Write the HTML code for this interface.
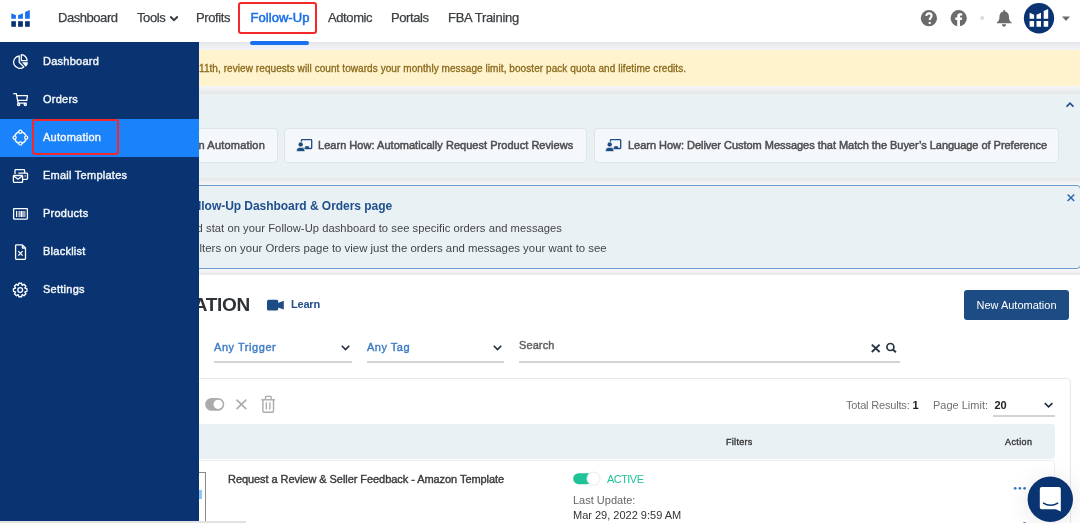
<!DOCTYPE html>
<html><head><meta charset="utf-8">
<style>
*{box-sizing:border-box;margin:0;padding:0}
body{will-change:transform}html,body{width:1080px;height:523px;overflow:hidden;background:#fff;font-family:"Liberation Sans",sans-serif;position:relative}
.a{position:absolute;white-space:nowrap}
.nav{font-size:13px;color:#3d4043;top:10px;line-height:16px;letter-spacing:-0.4px;-webkit-text-stroke:0.25px #3d4043}
.sb{font-size:11px;font-weight:400;color:#f4f6fa;left:43px;line-height:14px;letter-spacing:0.25px;-webkit-text-stroke:0.4px #f4f6fa}
.lb{background:#f5f8fa;border:1px solid #dde4ea;border-radius:4px;top:128px;height:34.5px}
.lbt{font-size:11px;font-weight:400;color:#4d4f52;line-height:14px;letter-spacing:0.03px;top:138px;-webkit-text-stroke:0.5px #4d4f52}
.ul{height:2px;background:#d3d3d3}
</style></head><body>
<!-- header -->
<svg class="a" style="left:0;top:0" width="40" height="40" viewBox="0 0 40 40">
<path d="M11.3 13.3 L15.9 15.3 L15.9 18.8 L11.3 18.8Z" fill="#1a6ef0"/>
<path d="M18.1 15.3 L22.9 13.3 L22.9 18.8 L18.1 18.8Z" fill="#1a6ef0"/>
<path d="M25.1 11.9 L29.8 9.9 L29.8 18.8 L25.1 18.8Z" fill="#1a6ef0"/>
<rect x="11.3" y="21.2" width="4.6" height="5.6" fill="#0a3471"/>
<rect x="18.1" y="21.2" width="4.8" height="5.6" fill="#0a3471"/>
<rect x="25.1" y="21.2" width="4.7" height="5.6" fill="#0a3471"/>
</svg>
<div class="a nav" style="left:58px;letter-spacing:-0.45px">Dashboard</div>
<div class="a nav" style="left:137px">Tools</div>
<svg class="a" style="left:169px;top:15px" width="10" height="7" viewBox="0 0 10 7"><path d="M1.3 1.5 L5 5.2 L8.7 1.5" fill="none" stroke="#33393f" stroke-width="1.9"/></svg>
<div class="a nav" style="left:196px">Profits</div>
<div class="a" style="left:238px;top:2px;width:79px;height:32px;border:2px solid #f42828;border-radius:3px"></div>
<div class="a nav" style="left:250.5px;color:#1a6ee8;font-weight:400;letter-spacing:0.05px;-webkit-text-stroke:0.5px #1a6ee8">Follow-Up</div>
<div class="a nav" style="left:328px">Adtomic</div>
<div class="a nav" style="left:391px">Portals</div>
<div class="a nav" style="left:448px;letter-spacing:-0.3px">FBA Training</div>

<!-- header right icons -->
<svg class="a" style="left:900px;top:0" width="180" height="42" viewBox="900 0 180 42">
<circle cx="928.9" cy="18.2" r="8.1" fill="#6b6b6b"/>
<path d="M926.4 15.9 C926.4 14.3 927.5 13.4 928.9 13.4 C930.4 13.4 931.6 14.3 931.6 15.8 C931.6 17.5 929.8 17.8 929.8 19.3 V20.1" fill="none" stroke="#fff" stroke-width="2.1"/>
<circle cx="929.7" cy="22.9" r="1.2" fill="#fff"/>
<circle cx="958.7" cy="18.2" r="8.1" fill="#6b6b6b"/>
<path d="M957.2 26.4 V20 H955.3 V17.5 H957.2 V15.9 C957.2 14.1 958.3 13.2 960 13.2 C960.9 13.2 962.2 13.4 962.2 13.4 V15.5 H960.9 C960.2 15.5 960 15.9 960 16.4 V17.5 H962.2 L961.8 20 H960 V26.4Z" fill="#fff"/>
<circle cx="982.2" cy="18.1" r="2.1" fill="#dedede"/>
<path d="M1004.2 10.1 C1004.9 10.1 1005.2 10.6 1005.2 11.6 C1008 12.3 1009 14.6 1009 17.3 C1009 19.8 1009.6 21.2 1011.6 22.6 V23.2 H996.8 V22.6 C998.8 21.2 999.4 19.8 999.4 17.3 C999.4 14.6 1000.4 12.3 1003.2 11.6 C1003.2 10.6 1003.5 10.1 1004.2 10.1Z M1001.9 24.3 H1006.1 C1006 25.8 1005.2 26.8 1004 26.8 C1002.8 26.8 1002 25.8 1001.9 24.3Z" fill="#6b6b6b"/>
<circle cx="1039" cy="18.25" r="15.15" fill="#0a3471"/>
<path d="M1029.6 12.7 L1034.1 14.8 L1034.1 18.7 L1029.6 18.7Z M1036.5 14.8 L1041 12.7 L1041 18.7 L1036.5 18.7Z M1043.7 11 L1048.2 8.9 L1048.2 18.7 L1043.7 18.7Z" fill="#fff"/>
<path d="M1029.6 21 H1034.1 V26.8 H1029.6Z M1036.5 21 H1041 V26.8 H1036.5Z M1043.7 21 H1048.2 V26.8 H1043.7Z" fill="#fff"/>
<path d="M1062 16.6 L1070 16.6 L1066 21Z" fill="#6b6b6b"/>
</svg>

<!-- gray strip / content background -->
<div class="a" style="left:0;top:42px;width:1080px;height:8px;background:linear-gradient(#e6e7ea,#f4f5f8)"></div>
<div class="a" style="left:250px;top:41px;width:59px;height:4px;background:#1a6ef0;border-radius:2px"></div>
<!-- yellow banner -->
<div class="a" style="left:0;top:50px;width:1080px;height:36px;background:#fff3cd"></div>
<div class="a" style="left:199px;top:62.6px;font-size:10px;font-weight:400;color:#8a6a1c;line-height:12px;letter-spacing:0.07px;-webkit-text-stroke:0.3px #8a6a1c">11th, review requests will count towards your monthly message limit, booster pack quota and lifetime credits.</div>
<div class="a" style="left:0;top:86px;width:1080px;height:8px;background:linear-gradient(#f5f6f8,#e5e6e8)"></div>
<!-- learn section -->
<div class="a" style="left:0;top:94px;width:1080px;height:84px;background:#e9f1f4"></div>
<svg class="a" style="left:1064px;top:100px" width="12" height="10" viewBox="0 0 12 10"><path d="M2.6 6.6 L6 3.2 L9.4 6.6" fill="none" stroke="#24508a" stroke-width="1.7"/></svg>
<div class="a lb" style="left:150px;width:128px"></div>
<div class="a lbt" style="right:815px;letter-spacing:0.2px">n Automation</div>
<div class="a lb" style="left:284px;width:303px"></div>
<svg class="a" style="left:296px;top:138px" width="14" height="14" viewBox="296 138 14 14"></svg>
<div class="a lbt" style="left:318px">Learn How: Automatically Request Product Reviews</div>
<div class="a lb" style="left:594px;width:465px"></div>
<div class="a lbt" style="left:628px;letter-spacing:-0.03px">Learn How: Deliver Custom Messages that Match the Buyer’s Language of Preference</div>
<svg class="a" style="left:0;top:0" width="1080" height="523" viewBox="0 0 1080 523">
<g id="teach">
<rect x="301.4" y="139.6" width="10.3" height="8.9" rx="0.8" fill="none" stroke="#1d4b84" stroke-width="1.3"/>
<circle cx="300.7" cy="144.4" r="2.9" fill="#f4f7f9"/>
<circle cx="300.7" cy="144.4" r="2.2" fill="#1d4b84"/>
<path d="M296.6 151.6 V150.2 Q296.6 147.5 299.3 147.5 H302.1 Q304.8 147.5 304.8 150.2 V151.6 Z" fill="#1d4b84" stroke="#f4f7f9" stroke-width="0.7"/>
<rect x="305.2" y="146.2" width="3.7" height="2.7" fill="#1d4b84"/>
</g>
<use href="#teach" x="309" y="0"/>
</svg>
<div class="a" style="left:0;top:178px;width:1080px;height:7px;background:linear-gradient(#e4e5e6,#f7f7f9)"></div>
<!-- info box -->
<div class="a" style="left:150px;top:185px;width:931px;height:84px;background:#e9f1f4;border:1.4px solid #6a9bcb;border-radius:4px"></div>
<svg class="a" style="left:1066px;top:193px" width="10" height="10" viewBox="1066 193 10 10"><path d="M1067.6 194.5 L1074.2 201 M1074.2 194.5 L1067.6 201" stroke="#2f6db0" stroke-width="1.6"/></svg>
<div class="a" style="left:198px;top:199px;font-size:12px;font-weight:700;color:#1f4f8c;line-height:14px;letter-spacing:-0.04px">llow-Up Dashboard &amp; Orders page</div>
<div class="a" style="right:518px;top:221px;font-size:11.2px;color:#444;line-height:14px;letter-spacing:0.05px">d stat on your Follow-Up dashboard to see specific orders and messages</div>
<div class="a" style="right:473.3px;top:241px;font-size:11.4px;color:#444;line-height:14px">ilters on your Orders page to view just the orders and messages your want to see</div>
<div class="a" style="left:0;top:269px;width:1080px;height:6px;background:linear-gradient(#f8f8f9,#e8e8ea)"></div>

<!-- title -->
<div class="a" style="right:830px;top:295px;font-size:19px;font-weight:700;color:#2f3338;line-height:20px;letter-spacing:-0.3px">AUTOMATION</div>
<svg class="a" style="left:266px;top:299px" width="19" height="13" viewBox="266 299 19 13">
<rect x="267" y="299.7" width="11.2" height="10.8" rx="1.5" fill="#1d4b84"/>
<path d="M278 303 L283.8 300.8 L283.8 309.6 L278 307.4Z" fill="#1d4b84"/>
</svg>
<div class="a" style="left:291px;top:297px;font-size:11px;font-weight:700;color:#234e88;line-height:14px;letter-spacing:-0.2px">Learn</div>
<div class="a" style="left:964px;top:290px;width:105px;height:30px;background:#1d4b84;border-radius:3px;color:#fff;font-size:11px;line-height:30px;text-align:center">New Automation</div>

<!-- filters -->
<div class="a" style="left:214px;top:340px;font-size:11px;font-weight:400;color:#3c7bc6;line-height:14px;letter-spacing:0.55px;-webkit-text-stroke:0.4px #3c7bc6">Any Trigger</div>
<svg class="a" style="left:340px;top:344px" width="11" height="8" viewBox="0 0 11 8"><path d="M1.8 1.8 L5.5 5.5 L9.2 1.8" fill="none" stroke="#1f2d3d" stroke-width="1.6"/></svg>
<div class="a ul" style="left:214px;top:361px;width:138px"></div>
<div class="a" style="left:367px;top:340px;font-size:11px;font-weight:400;color:#3c7bc6;line-height:14px;letter-spacing:0.5px;-webkit-text-stroke:0.4px #3c7bc6">Any Tag</div>
<svg class="a" style="left:492px;top:344px" width="11" height="8" viewBox="0 0 11 8"><path d="M1.8 1.8 L5.5 5.5 L9.2 1.8" fill="none" stroke="#1f2d3d" stroke-width="1.6"/></svg>
<div class="a ul" style="left:367px;top:361px;width:137px"></div>
<div class="a" style="left:519px;top:337.5px;font-size:11px;font-weight:400;color:#636363;line-height:14px;letter-spacing:0.1px;-webkit-text-stroke:0.45px #636363">Search</div>
<div class="a ul" style="left:519px;top:361px;width:381px"></div>
<svg class="a" style="left:868px;top:341px" width="32" height="15" viewBox="868 341 32 15">
<path d="M871.8 344.6 L879.6 352 M879.6 344.6 L871.8 352" stroke="#263340" stroke-width="1.9"/>
<circle cx="890.4" cy="347" r="3.5" fill="none" stroke="#263340" stroke-width="1.7"/>
<path d="M892.8 349.5 L895.9 352.3" stroke="#263340" stroke-width="2"/>
</svg>

<!-- card -->
<div class="a" style="left:150px;top:378px;width:921px;height:160px;border:1px solid #e6e9ec;border-radius:4px;background:#fff"></div>
<svg class="a" style="left:200px;top:390px" width="80" height="28" viewBox="200 390 80 28">
<rect x="205.2" y="397.9" width="19" height="12.9" rx="6.45" fill="#ababab"/>
<circle cx="218.1" cy="404.3" r="4.6" fill="#fff"/>
<path d="M236.5 399.7 L246.3 409.1 M246.3 399.7 L236.5 409.1" stroke="#ababab" stroke-width="1.6"/>
<path d="M261.2 399.8 H275" stroke="#ababab" stroke-width="1.4"/>
<path d="M265.5 399.6 V397.2 Q265.5 396.4 266.3 396.4 H270.4 Q271.2 396.4 271.2 397.2 V399.6" fill="none" stroke="#ababab" stroke-width="1.3"/>
<path d="M262.9 400 V411.2 Q262.9 412.2 263.9 412.2 H272.5 Q273.5 412.2 273.5 411.2 V400" fill="none" stroke="#ababab" stroke-width="1.4"/>
<path d="M266.4 402.3 V409.4 M269.9 402.3 V409.4" stroke="#ababab" stroke-width="1.4"/>
</svg>
<div class="a" style="left:846px;top:397.5px;font-size:11px;color:#707070;line-height:14px;letter-spacing:-0.18px">Total Results: <b style="color:#222">1</b></div>
<div class="a" style="left:933px;top:397.5px;font-size:11px;color:#707070;line-height:14px">Page Limit:</div>
<div class="a" style="left:994.5px;top:397.5px;font-size:11px;font-weight:700;color:#222;line-height:14px">20</div>
<svg class="a" style="left:1043px;top:401px" width="12" height="8" viewBox="0 0 12 8"><path d="M1.8 2.2 L5.6 5.8 L9.4 2.2" fill="none" stroke="#1f2d3d" stroke-width="1.6"/></svg>
<div class="a ul" style="left:993px;top:415px;width:62px"></div>
<div class="a" style="left:150px;top:424px;width:905px;height:35px;background:#e9f1f4;border-radius:3px"></div>
<div class="a" style="left:726px;top:436px;font-size:9px;font-weight:400;color:#333;line-height:12px;letter-spacing:0.3px;-webkit-text-stroke:0.35px #333">Filters</div>
<div class="a" style="left:1005px;top:436px;font-size:9px;font-weight:400;color:#333;line-height:12px;letter-spacing:0.4px;-webkit-text-stroke:0.35px #333">Action</div>
<div class="a" style="left:150px;top:460px;width:905px;height:80px;border:1px solid #eceef0;border-radius:4px"></div>
<div class="a" style="left:150px;top:472px;width:56px;height:60px;border:1px solid #8a8a8a"></div>
<div class="a" style="left:199px;top:490px;width:3px;height:9px;background:#8cc8f5"></div>
<div class="a" style="left:228px;top:472px;font-size:11px;font-weight:400;color:#3a3d40;line-height:14px;letter-spacing:-0.06px;-webkit-text-stroke:0.4px #3a3d40">Request a Review &amp; Seller Feedback - Amazon Template</div>
<svg class="a" style="left:570px;top:468px" width="34" height="22" viewBox="570 468 34 22">
<rect x="573.2" y="473.2" width="20" height="11" rx="5.5" fill="#20c297"/>
<circle cx="593.5" cy="478.7" r="6.6" fill="#fff" stroke="#e4e4e4" stroke-width="0.8"/>
</svg>
<div class="a" style="left:607px;top:472px;font-size:11px;color:#20c39a;line-height:14px;letter-spacing:-0.55px">ACTIVE</div>
<div class="a" style="left:573px;top:493px;font-size:11px;color:#666;line-height:14px">Last Update:</div>
<div class="a" style="left:573px;top:508px;font-size:11px;color:#333;line-height:14px">Mar 29, 2022 9:59 AM</div>
<svg class="a" style="left:1010px;top:484px" width="20" height="8" viewBox="1010 484 20 8">
<circle cx="1015.2" cy="488.3" r="1.35" fill="#3a7bc6"/><circle cx="1019.9" cy="488.3" r="1.35" fill="#3a7bc6"/><circle cx="1024.6" cy="488.3" r="1.35" fill="#3a7bc6"/>
</svg>

<!-- chat bubble -->
<div class="a" style="left:1027.6px;top:476.5px;width:45.4px;height:45.4px;border-radius:50%;box-shadow:0 2px 24px rgba(0,0,0,0.10)"></div>
<div class="a" style="left:1022.5px;top:521.6px;width:3px;height:3px;border-radius:50%;background:#3a7bc6"></div>
<svg class="a" style="left:1020px;top:470px" width="60" height="53" viewBox="1020 470 60 53">
<circle cx="1050.3" cy="499.2" r="22.7" fill="#0a3471"/>
<path d="M1041.8 487.1 H1058.8 Q1060.8 487.1 1060.8 489.1 V511.4 L1055.8 509.2 H1041.8 Q1039.8 509.2 1039.8 507.2 V489.1 Q1039.8 487.1 1041.8 487.1Z" fill="#fff"/>
<path d="M1043 502.8 Q1050.5 507.8 1058.2 502.8" fill="none" stroke="#0a3471" stroke-width="1.6"/>
</svg>

<!-- sidebar -->
<div class="a" style="left:0;top:42px;width:199px;height:479px;background:#0a3471"></div>
<div class="a" style="left:0;top:521px;width:246px;height:2px;background:#e2e2e2"></div>
<div class="a" style="left:0;top:119px;width:199px;height:38px;background:#1a82fb"></div>
<div class="a" style="left:32px;top:119px;width:87px;height:36px;border:2px solid #f42828;border-radius:3px"></div>
<div class="a sb" style="top:54px">Dashboard</div>
<div class="a sb" style="top:92px">Orders</div>
<div class="a sb" style="top:130px">Automation</div>
<div class="a sb" style="top:168px">Email Templates</div>
<div class="a sb" style="top:206px">Products</div>
<div class="a sb" style="top:244px">Blacklist</div>
<div class="a sb" style="top:282px">Settings</div>
<svg class="a" style="left:0;top:42px" width="40" height="260" viewBox="0 42 40 260">
<g fill="none" stroke="#fff" stroke-width="1.3" stroke-linejoin="round">
<!-- dashboard pie -->
<path d="M19.2 56 A6.2 6.2 0 1 0 23.8 66.9 L19.2 62.2 Z"/>
<path d="M21.3 54.7 A6 6 0 0 1 27.1 60.6 L21.3 60.6 Z"/>
<!-- cart -->
<path d="M13.3 93.6 H16.3 L18.1 103.1 H26.7"/>
<path d="M16.9 95.6 H27.4 L26.8 100.3 H17.8"/>
<circle cx="18.6" cy="104.6" r="1.1"/>
<circle cx="25.3" cy="104.6" r="1.1"/>
<!-- automation -->
<circle cx="20.4" cy="137.6" r="5.8" stroke-width="1.6"/>
<!-- email -->
<path d="M15 173.9 V170.4 Q15 169.6 15.8 169.6 H23.8 Q24.6 169.6 24.6 170.4 V173"/>
<path d="M18.4 173.2 H26.7 Q27.5 173.2 27.5 174 V178.6 Q27.5 179.4 26.7 179.4 H22.8"/>
<rect x="13.4" y="175.5" width="9.2" height="6.8" rx="0.6"/>
<path d="M13.6 176 L18 179.2 L22.4 176"/>
<!-- products -->
<rect x="13.6" y="208.7" width="13.8" height="10.4" rx="0.5"/>
<!-- blacklist -->
<path d="M22.4 244.9 H16.3 Q15.6 244.9 15.6 245.6 V258.6 Q15.6 259.3 16.3 259.3 H24.8 Q25.5 259.3 25.5 258.6 V248 Z"/>
<path d="M22.4 244.9 V248 H25.5"/>
<path d="M18.3 251.1 L22.6 255.6 M22.6 251.1 L18.3 255.6"/>
<!-- settings -->
<circle cx="20.2" cy="290" r="2.4"/>
</g>
<g fill="#fff">
<path d="M22 62.3 H28 A6 6 0 0 1 25.8 66.7 Z"/>
<circle cx="20.4" cy="131.8" r="1.6" fill="#1a82fb" stroke="#fff" stroke-width="1.2"/>
<circle cx="20.4" cy="143.4" r="1.6" fill="#1a82fb" stroke="#fff" stroke-width="1.2"/>
<circle cx="14.6" cy="137.6" r="1.6" fill="#1a82fb" stroke="#fff" stroke-width="1.2"/>
<circle cx="26.2" cy="137.6" r="1.6" fill="#1a82fb" stroke="#fff" stroke-width="1.2"/>
<circle cx="25.1" cy="175.9" r="0.7"/>
<rect x="16" y="211" width="1" height="6"/><rect x="17.8" y="211" width="0.6" height="6"/><rect x="19.3" y="211" width="1.2" height="6"/><rect x="21" y="211" width="1.6" height="6"/><rect x="23.3" y="211" width="0.6" height="6"/><rect x="24.4" y="211" width="0.9" height="6"/>
</g>
<path d="M18.40 285.23 L18.83 283.24 L21.57 283.24 L22.00 285.23 L22.30 285.35 L24.01 284.25 L25.95 286.19 L24.85 287.90 L24.97 288.20 L26.96 288.63 L26.96 291.37 L24.97 291.80 L24.85 292.10 L25.95 293.81 L24.01 295.75 L22.30 294.65 L22.00 294.77 L21.57 296.76 L18.83 296.76 L18.40 294.77 L18.10 294.65 L16.39 295.75 L14.45 293.81 L15.55 292.10 L15.43 291.80 L13.44 291.37 L13.44 288.63 L15.43 288.20 L15.55 287.90 L14.45 286.19 L16.39 284.25 L18.10 285.35Z" fill="none" stroke="#fff" stroke-width="1.3" stroke-linejoin="round"/>
</svg>
</body></html>
